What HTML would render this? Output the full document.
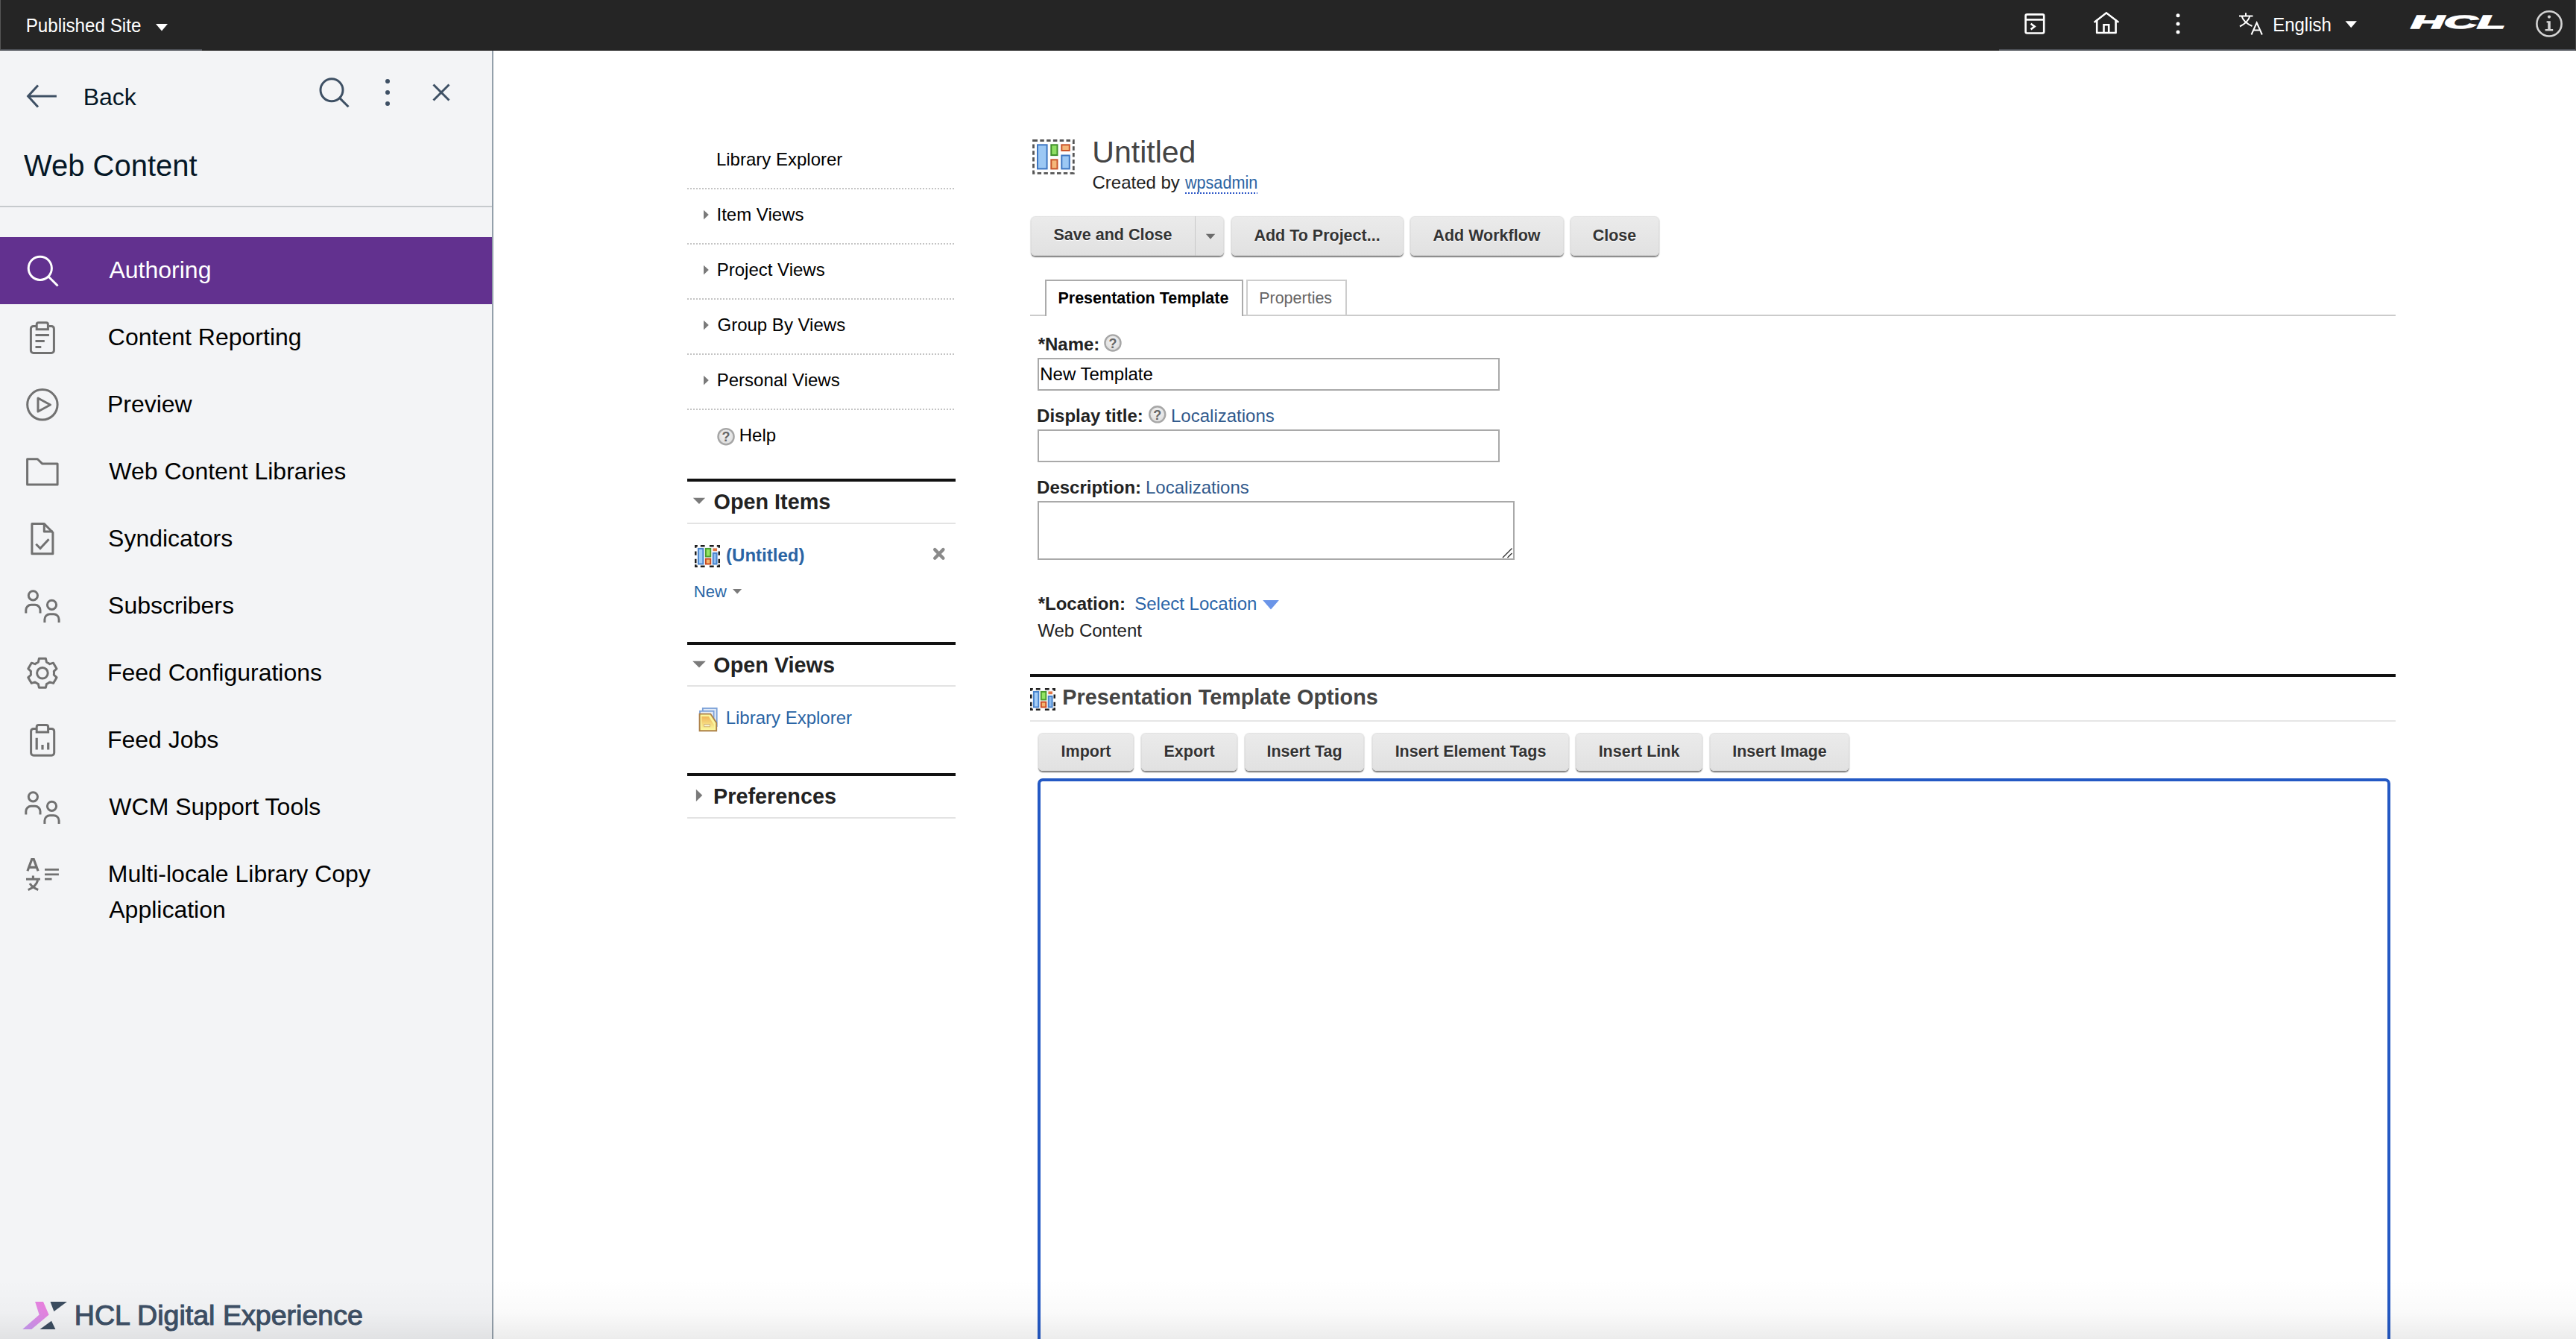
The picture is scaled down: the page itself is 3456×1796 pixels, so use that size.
<!DOCTYPE html><html><head><meta charset="utf-8"><title>Web Content</title><style>
html,body{margin:0;padding:0;width:3456px;height:1796px;overflow:hidden;background:#fff;}
body{position:relative;font-family:"Liberation Sans",sans-serif;}
.a{position:absolute;display:block;}
.t{position:absolute;white-space:nowrap;line-height:normal;}
.btn{position:absolute;border-radius:6px;background:linear-gradient(#ebebeb,#e1e1e1);box-shadow:0 1.5px 1.5px rgba(0,0,0,0.5), inset 0 0 0 1px rgba(0,0,0,0.03);}
.bt{text-shadow:0 1px 1px #fff;}
</style></head><body>
<div class="a" style="left:0px;top:0px;width:3456px;height:68px;background:#252525;"></div>
<div class="a" style="left:0px;top:66px;width:271px;height:2px;background:#50535a;"></div>
<div class="a" style="left:2682px;top:66px;width:774px;height:2px;background:#50535a;"></div>
<div class="a" style="left:0px;top:0px;width:1px;height:68px;background:#555;"></div>
<div class="a" style="left:3455px;top:0px;width:1px;height:68px;background:#444;"></div>
<div class="t " style="left:34.72px;top:21.30px;font-size:24.2px;color:#fff;transform:scaleY(1.07);transform-origin:0 85%;">Published Site</div>
<svg class="a" style="left:205px;top:28px;" width="25" height="18" viewBox="205 28 25 18"><path d="M209 32 L225 32 L217 41.5 Z" fill="#fff"/></svg>
<svg class="a" style="left:2710px;top:12px;" width="40" height="40" viewBox="2710 12 40 40"><rect x="2717.6" y="19.4" width="24.6" height="25.1" rx="2" fill="none" stroke="#fff" stroke-width="2.6"/><line x1="2717.6" y1="26.4" x2="2742.2" y2="26.4" stroke="#fff" stroke-width="2.6"/><path d="M2724.6 31.8 L2729.6 35.6 L2724.6 39.4" fill="none" stroke="#fff" stroke-width="2.6"/></svg>
<svg class="a" style="left:2800px;top:10px;" width="52" height="42" viewBox="2800 10 52 42"><path d="M2809.6 30 L2825.9 17.3 L2842.4 30" fill="none" stroke="#fff" stroke-width="2.6"/><path d="M2813.2 26.5 V44 H2838.6 V26.5" fill="none" stroke="#fff" stroke-width="2.6" stroke-linejoin="round"/><path d="M2822.5 44.5 V33.3 H2829.2 V44.5" fill="none" stroke="#fff" stroke-width="2.6"/></svg>
<svg class="a" style="left:2912px;top:14px;" width="20" height="36" viewBox="2912 14 20 36"><circle cx="2922" cy="20.7" r="2.5" fill="#fff"/><circle cx="2922" cy="32" r="2.5" fill="#fff"/><circle cx="2922" cy="43" r="2.5" fill="#fff"/></svg>
<svg class="a" style="left:2998px;top:12px;" width="42" height="38" viewBox="2998 12 42 38"><path d="M3004 21.5 H3022.5 M3013 17.3 V21.5 M3007.5 21.5 Q3010 30 3021.5 35 M3018.5 21.5 Q3016 30 3005 35.5" fill="none" stroke="#fff" stroke-width="2"/><path d="M3020.5 46.5 L3027.7 30.5 L3034.9 46.5 M3023.2 40.5 H3032.2" fill="none" stroke="#fff" stroke-width="2"/></svg>
<div class="t " style="left:3049.13px;top:20.10px;font-size:24.0px;color:#fff;transform:scaleY(1.07);transform-origin:0 85%;">English</div>
<svg class="a" style="left:3142px;top:24px;" width="24" height="18" viewBox="3142 24 24 18"><path d="M3146.5 28.2 L3162 28.2 L3154.25 37.3 Z" fill="#fff"/></svg>
<svg class="a" style="left:3230px;top:16px;" width="134" height="28" viewBox="3230 16 134 28"><text x="0" y="0" transform="translate(3234.5 38.3) scale(2.25 0.88)" font-family="Liberation Sans" font-weight="bold" font-style="italic" font-size="27.4" fill="#fff" stroke="#fff" stroke-width="1.7">HCL</text></svg>
<svg class="a" style="left:3398px;top:10px;" width="44" height="44" viewBox="3398 10 44 44"><circle cx="3420" cy="31.9" r="16.6" fill="none" stroke="#d4d4d4" stroke-width="2.6"/><circle cx="3420" cy="22.6" r="2.1" fill="#d4d4d4"/><path d="M3416.6 28.2 H3421.8 V38.9 H3425.2 V41.6 H3414.6 V38.9 H3418.2 V30.6 H3416.6 Z" fill="#d4d4d4"/></svg>
<div class="a" style="left:0px;top:68px;width:660px;height:1728px;background:#f3f4f6;"></div>
<div class="a" style="left:660px;top:68px;width:2px;height:1728px;background:#94a0ab;"></div>
<svg class="a" style="left:30px;top:108px;" width="52" height="42" viewBox="30 108 52 42"><path d="M75.9 129 H39 M51 114.5 L37.6 129 L51 143.5" fill="none" stroke="#3e5064" stroke-width="3"/></svg>
<div class="t " style="left:111.68px;top:111.50px;font-size:32px;color:#051726;">Back</div>
<svg class="a" style="left:420px;top:95px;" width="55" height="55" viewBox="420 95 55 55"><circle cx="445" cy="120.8" r="15" fill="none" stroke="#3e5064" stroke-width="3"/><path d="M455.8 131.6 L467.5 143.3" stroke="#3e5064" stroke-width="3"/></svg>
<svg class="a" style="left:510px;top:100px;" width="20" height="48" viewBox="510 100 20 48"><circle cx="520" cy="109" r="3" fill="#3e5064"/><circle cx="520" cy="124" r="3" fill="#3e5064"/><circle cx="520" cy="139" r="3" fill="#3e5064"/></svg>
<svg class="a" style="left:575px;top:107px;" width="35" height="34" viewBox="575 107 35 34"><path d="M581.5 113.5 L602.5 134.5 M602.5 113.5 L581.5 134.5" stroke="#3e5064" stroke-width="3"/></svg>
<div class="t " style="left:31.94px;top:200.10px;font-size:40px;color:#051726;">Web Content</div>
<div class="a" style="left:0px;top:276px;width:660px;height:2px;background:#c6cacd;"></div>
<div class="a" style="left:0px;top:318px;width:660px;height:90px;background:#62318f;"></div>
<div class="t " style="left:146.44px;top:344.30px;font-size:32px;color:#fff;">Authoring</div>
<div class="t " style="left:144.87px;top:434.30px;font-size:32px;color:#000;">Content Reporting</div>
<div class="t " style="left:143.88px;top:524.30px;font-size:32px;color:#000;">Preview</div>
<div class="t " style="left:146.37px;top:614.30px;font-size:32px;color:#000;">Web Content Libraries</div>
<div class="t " style="left:145.06px;top:704.30px;font-size:32px;color:#000;">Syndicators</div>
<div class="t " style="left:145.06px;top:794.30px;font-size:32px;color:#000;">Subscribers</div>
<div class="t " style="left:143.88px;top:884.30px;font-size:32px;color:#000;">Feed Configurations</div>
<div class="t " style="left:143.88px;top:974.30px;font-size:32px;color:#000;">Feed Jobs</div>
<div class="t " style="left:146.37px;top:1064.30px;font-size:32px;color:#000;">WCM Support Tools</div>
<div class="t " style="left:144.78px;top:1154.40px;font-size:32px;color:#000;">Multi-locale Library Copy</div>
<div class="t " style="left:146.24px;top:1202.00px;font-size:32px;color:#000;">Application</div>
<svg class="a" style="left:30px;top:335px;" width="55" height="57" viewBox="30 335 55 57"><circle cx="53.8" cy="359.8" r="15.6" fill="none" stroke="#fff" stroke-width="3"/><path d="M65 371 L77.6 383.5" stroke="#fff" stroke-width="3"/></svg>
<svg class="a" style="left:34px;top:425px;" width="46" height="55" viewBox="34 425 46 55"><path d="M48.4 437.4 H44.9 A3.5 3.5 0 0 0 41.4 440.9 V469.9 A3.5 3.5 0 0 0 44.9 473.4 H68.9 A3.5 3.5 0 0 0 72.4 469.9 V440.9 A3.5 3.5 0 0 0 68.9 437.4 H65.9" fill="none" stroke="#717171" stroke-width="3"/><path d="M49.2 441.8 V435.2 A2.5 2.5 0 0 1 51.7 432.7 H61.9 A2.5 2.5 0 0 1 64.4 435.2 V441.8 Z" fill="none" stroke="#717171" stroke-width="3"/><path d="M47.5 449.6 H65.9 M47.5 457.4 H59.8 M47.5 465.5 H55.3" stroke="#717171" stroke-width="3"/></svg>
<svg class="a" style="left:30px;top:515px;" width="55" height="57" viewBox="30 515 55 57"><circle cx="56.9" cy="542.8" r="20.2" fill="none" stroke="#717171" stroke-width="3"/><path d="M51 534 L67.5 543 L51 552 Z" fill="none" stroke="#717171" stroke-width="3" stroke-linejoin="round"/></svg>
<svg class="a" style="left:30px;top:608px;" width="55" height="50" viewBox="30 608 55 50"><path d="M36.6 615.7 H50.3 L56.6 621.9 H77.1 V650 H36.6 Z" fill="none" stroke="#717171" stroke-width="3" stroke-linejoin="round"/></svg>
<svg class="a" style="left:36px;top:695px;" width="42" height="55" viewBox="36 695 42 55"><path d="M42.9 702.5 H59.3 L70.9 714.3 V742.8 H42.9 Z" fill="none" stroke="#717171" stroke-width="3" stroke-linejoin="round"/><path d="M59.3 702.5 V713 H70.9" fill="none" stroke="#717171" stroke-width="3" stroke-linejoin="round"/><path d="M48.3 729.8 L54 735.5 L65.5 723.3" fill="none" stroke="#717171" stroke-width="3"/></svg>
<svg class="a" style="left:28px;top:785px;" width="58" height="55" viewBox="28 785 58 55"><circle cx="44.4" cy="798.8" r="6.1" fill="none" stroke="#717171" stroke-width="3"/><path d="M34.8 822.4 V818.3 A7 7 0 0 1 41.8 811.3 H47 A7 7 0 0 1 54 818.3 V822.4" fill="none" stroke="#717171" stroke-width="3"/><circle cx="69.5" cy="811.3" r="6.1" fill="none" stroke="#717171" stroke-width="3"/><path d="M59.9 835 V830.7 A7 7 0 0 1 66.9 823.7 H72.1 A7 7 0 0 1 79.1 830.7 V835" fill="none" stroke="#717171" stroke-width="3"/></svg>
<svg class="a" style="left:28px;top:1055px;" width="58" height="55" viewBox="28 1055 58 55"><circle cx="44.4" cy="1068.8" r="6.1" fill="none" stroke="#717171" stroke-width="3"/><path d="M34.8 1092.4 V1088.3 A7 7 0 0 1 41.8 1081.3 H47 A7 7 0 0 1 54 1088.3 V1092.4" fill="none" stroke="#717171" stroke-width="3"/><circle cx="69.5" cy="1081.3" r="6.1" fill="none" stroke="#717171" stroke-width="3"/><path d="M59.9 1105 V1100.7 A7 7 0 0 1 66.9 1093.7 H72.1 A7 7 0 0 1 79.1 1100.7 V1105" fill="none" stroke="#717171" stroke-width="3"/></svg>
<svg class="a" style="left:30px;top:876px;" width="54" height="54" viewBox="30 876 54 54"><path d="M49.10 889.29 L51.31 888.24 L52.40 883.31 L61.40 883.31 L62.49 888.24 L64.70 889.29 L66.72 890.68 L71.53 889.16 L76.03 896.95 L72.31 900.36 L72.50 902.80 L72.31 905.24 L76.03 908.65 L71.53 916.44 L66.72 914.92 L64.70 916.31 L62.49 917.36 L61.40 922.29 L52.40 922.29 L51.31 917.36 L49.10 916.31 L47.08 914.92 L42.27 916.44 L37.77 908.65 L41.49 905.24 L41.30 902.80 L41.49 900.36 L37.77 896.95 L42.27 889.16 L47.08 890.68 Z" fill="none" stroke="#717171" stroke-width="3" stroke-linejoin="round"/><circle cx="56.9" cy="902.8" r="7.3" fill="none" stroke="#717171" stroke-width="3"/></svg>
<svg class="a" style="left:34px;top:965px;" width="46" height="55" viewBox="34 965 46 55"><path d="M48.4 977.4 H45.1 A3.5 3.5 0 0 0 41.6 980.9 V1009.7 A3.5 3.5 0 0 0 45.1 1013.2 H69.2 A3.5 3.5 0 0 0 72.7 1009.7 V980.9 A3.5 3.5 0 0 0 69.2 977.4 H65.9" fill="none" stroke="#717171" stroke-width="3"/><path d="M49.2 982 V975 A2.5 2.5 0 0 1 51.7 972.5 H62.1 A2.5 2.5 0 0 1 64.6 975 V982 Z" fill="none" stroke="#717171" stroke-width="3"/><path d="M49.2 989.8 V1005.5 M57 999 V1005.5 M64.7 996.1 V1005.5" stroke="#717171" stroke-width="3.2"/></svg>
<svg class="a" style="left:30px;top:1145px;" width="54" height="55" viewBox="30 1145 54 55"><path d="M36.9 1168.3 L42.7 1152.7 H45.3 L51.1 1168.3 M39.4 1163.3 H48.6" fill="none" stroke="#717171" stroke-width="3.2" stroke-linejoin="miter"/><path d="M35 1179.3 H53.9 M44.4 1174.4 V1179 M50.6 1180.8 Q48.5 1189 37.7 1193.6 M40 1185 Q43.5 1190.5 51.2 1193.5" fill="none" stroke="#717171" stroke-width="3.1"/><path d="M60 1166.3 H78.9 M60 1172.8 H78.9 M60 1179.1 H69.5" stroke="#717171" stroke-width="2.7"/></svg>
<svg class="a" style="left:26px;top:1740px;" width="70" height="50" viewBox="26 1740 70 50"><defs><linearGradient id="pk" x1="0" y1="1" x2="1" y2="0"><stop offset="0" stop-color="#c79bf2"/><stop offset="1" stop-color="#f07ddc"/></linearGradient></defs><path d="M47.1 1746 H58 L65.6 1763.5 L42.3 1783 H30.2 L52.6 1763.5 Z" fill="url(#pk)"/><path d="M67.5 1746 H89.9 L72.4 1759 Z" fill="#3c4d60"/><path d="M53.5 1783 L69 1771.8 L74.4 1783 Z" fill="#3c4d60"/></svg>
<div class="t " style="left:99.82px;top:1742.80px;font-size:37.6px;color:#3e5066;letter-spacing:0px;-webkit-text-stroke:1.1px #3e5066;">HCL Digital Experience</div>
<div class="t " style="left:960.93px;top:199.90px;font-size:24px;color:#000;">Library Explorer</div>
<div class="a" style="left:922px;top:252px;width:360px;height:2px;background:repeating-linear-gradient(90deg,#c4c4c4 0 2px,transparent 2px 4px);"></div>
<div class="a" style="left:922px;top:326px;width:360px;height:2px;background:repeating-linear-gradient(90deg,#c4c4c4 0 2px,transparent 2px 4px);"></div>
<div class="a" style="left:922px;top:400px;width:360px;height:2px;background:repeating-linear-gradient(90deg,#c4c4c4 0 2px,transparent 2px 4px);"></div>
<div class="a" style="left:922px;top:474px;width:360px;height:2px;background:repeating-linear-gradient(90deg,#c4c4c4 0 2px,transparent 2px 4px);"></div>
<div class="a" style="left:922px;top:548px;width:360px;height:2px;background:repeating-linear-gradient(90deg,#c4c4c4 0 2px,transparent 2px 4px);"></div>
<svg class="a" style="left:943px;top:280px;" width="9" height="16" viewBox="943 280 9 16"><path d="M944 281.7 L950.8 288.1 L944 294.5 Z" fill="#7a7a7a"/></svg>
<div class="t " style="left:961.49px;top:273.70px;font-size:24px;color:#000;">Item Views</div>
<svg class="a" style="left:943px;top:354px;" width="9" height="16" viewBox="943 354 9 16"><path d="M944 355.7 L950.8 362.1 L944 368.5 Z" fill="#7a7a7a"/></svg>
<div class="t " style="left:961.73px;top:347.70px;font-size:24px;color:#000;">Project Views</div>
<svg class="a" style="left:943px;top:428px;" width="9" height="16" viewBox="943 428 9 16"><path d="M944 429.7 L950.8 436.1 L944 442.5 Z" fill="#7a7a7a"/></svg>
<div class="t " style="left:962.50px;top:421.70px;font-size:24px;color:#000;">Group By Views</div>
<svg class="a" style="left:943px;top:502px;" width="9" height="16" viewBox="943 502 9 16"><path d="M944 503.70000000000005 L950.8 510.1 L944 516.5 Z" fill="#7a7a7a"/></svg>
<div class="t " style="left:961.73px;top:495.70px;font-size:24px;color:#000;">Personal Views</div>
<svg class="a" style="left:961px;top:572px;" width="26" height="27" viewBox="961 572 26 27"><defs><radialGradient id="hg962573" cx="0.5" cy="0.4" r="0.6"><stop offset="0" stop-color="#f4f4f4"/><stop offset="1" stop-color="#dcdcdc"/></radialGradient></defs><circle cx="974.05" cy="585.65" r="10.55" fill="url(#hg962573)" stroke="#a6a6a6" stroke-width="2.4"/><text x="974.05" y="592.4499999999999" text-anchor="middle" font-family="Liberation Sans" font-weight="bold" font-size="18" fill="#666">?</text></svg>
<div class="t " style="left:991.73px;top:569.80px;font-size:24px;color:#000;">Help</div>
<div class="a" style="left:922px;top:642px;width:360px;height:4px;background:#111;"></div>
<svg class="a" style="left:928px;top:666px;" width="20" height="11" viewBox="928 666 20 11"><path d="M929.8 667.8 L946.1 667.8 L937.95 675.9 Z" fill="#7a7a7a"/></svg>
<div class="t " style="left:957.52px;top:657.40px;font-size:28.8px;color:#222;font-weight:bold;">Open Items</div>
<div class="a" style="left:922px;top:701px;width:360px;height:2px;background:#e3e3e3;"></div>
<svg class="a" style="left:932px;top:731px;" width="34" height="30" viewBox="0 0 34 30"><rect x="2.5" y="2.5" width="29" height="25" fill="#f7fafd"/><path d="M0 1.25 H3.8 M0 28.75 H3.8 M7.8 1.25 H13.6 M7.8 28.75 H13.6 M19.9 1.25 H25.7 M19.9 28.75 H25.7 M29.8 1.25 H34 M29.8 28.75 H34 M1.25 0 V3.8 M32.75 0 V3.8 M1.25 8.4 V13.8 M32.75 8.4 V13.8 M1.25 18.8 V24.2 M32.75 18.8 V24.2 M1.25 26.2 V30 M32.75 26.2 V30" stroke="#1e1e1e" stroke-width="2.5" fill="none"/><rect x="4.9" y="4.9" width="6.4" height="20.6" fill="#a3cdf8" stroke="#4682cc" stroke-width="1.9"/><rect x="14.8" y="4.9" width="6.5" height="10.6" fill="#93e462" stroke="#4a9c2e" stroke-width="1.9"/><rect x="24.4" y="4.4" width="5.6" height="3.8" fill="#e27444"/><rect x="14.8" y="18.6" width="6.5" height="6.9" fill="#f3b46f" stroke="#c94820" stroke-width="1.9"/><rect x="24.7" y="10.9" width="4.9" height="14.6" fill="#8fbdef" stroke="#4682cc" stroke-width="1.9"/></svg>
<div class="t " style="left:974.10px;top:731.20px;font-size:24px;color:#2a64a4;font-weight:bold;">(Untitled)</div>
<svg class="a" style="left:1249px;top:732px;" width="22" height="22" viewBox="1249 732 22 22"><path d="M1254.2 737.1 L1265.4 748.7 M1265.4 737.1 L1254.2 748.7" stroke="#8a8a8a" stroke-width="4.4" stroke-linecap="round"/></svg>
<div class="t " style="left:930.80px;top:780.90px;font-size:22px;color:#2a64a4;">New</div>
<svg class="a" style="left:982px;top:789px;" width="15" height="9" viewBox="982 789 15 9"><path d="M983 790 L995.2 790 L989.1 796.4 Z" fill="#7a7a7a"/></svg>
<div class="a" style="left:922px;top:861px;width:360px;height:4px;background:#111;"></div>
<svg class="a" style="left:928px;top:885px;" width="20" height="12" viewBox="928 885 20 12"><path d="M929.2 886.8 L946.8 886.8 L938.0 895.4 Z" fill="#7a7a7a"/></svg>
<div class="t " style="left:957.32px;top:876.10px;font-size:28.8px;color:#222;font-weight:bold;">Open Views</div>
<div class="a" style="left:922px;top:919px;width:360px;height:2px;background:#e3e3e3;"></div>
<svg class="a" style="left:936px;top:947px;" width="29" height="36" viewBox="936 947 29 36"><defs><linearGradient id="fy" x1="0" y1="0" x2="0" y2="1"><stop offset="0" stop-color="#efb55a"/><stop offset="1" stop-color="#faf59a"/></linearGradient></defs><rect x="942.8" y="950" width="18.9" height="24" fill="#e3ebf6" stroke="#7aa0d8" stroke-width="1.8"/><rect x="939" y="953.8" width="18.6" height="24" fill="#e8eef7" stroke="#7aa0d8" stroke-width="1.8"/><path d="M938.6 957.6 H953.3 L961.2 969.6 V980.3 H938.6 Z" fill="#fbf59c" stroke="#ad8148" stroke-width="1.9"/><path d="M941.3 961 H950.8 L958 972 V978 H941.3 Z" fill="url(#fy)"/><rect x="944.5" y="971.5" width="8" height="3.2" fill="#f6efcf" stroke="#d4b774" stroke-width="1"/></svg>
<div class="t " style="left:973.63px;top:949.00px;font-size:24px;color:#2a64a4;">Library Explorer</div>
<div class="a" style="left:922px;top:1037px;width:360px;height:4px;background:#111;"></div>
<svg class="a" style="left:932px;top:1057px;" width="12" height="19" viewBox="932 1057 12 19"><path d="M933.9 1058.8 L942.3 1066.85 L933.9 1074.9 Z" fill="#7a7a7a"/></svg>
<div class="t " style="left:957.07px;top:1051.90px;font-size:28.8px;color:#222;font-weight:bold;">Preferences</div>
<div class="a" style="left:922px;top:1096px;width:360px;height:2px;background:#e3e3e3;"></div>
<svg class="a" style="left:1385px;top:187px;" width="58" height="48" viewBox="0 0 58 48"><rect x="1.5" y="1.5" width="53.8" height="43.8" fill="#fdfdfd" stroke="#555" stroke-width="2.8" stroke-dasharray="5.5 3.3"/><rect x="7" y="7.3" width="12.6" height="32.1" fill="#9cc8f4" stroke="#3d76c2" stroke-width="2"/><rect x="25.3" y="7.3" width="8.2" height="13.8" fill="#8fdf63" stroke="#41902b" stroke-width="2"/><rect x="39.3" y="7.3" width="10.5" height="7.7" fill="#f5b77a" stroke="#c9552b" stroke-width="2"/><rect x="25.3" y="27.3" width="8.2" height="12.1" fill="#f5b77a" stroke="#c9552b" stroke-width="2"/><rect x="39.3" y="21.5" width="10.5" height="17.9" fill="#9cc8f4" stroke="#3d76c2" stroke-width="2"/></svg>
<div class="t " style="left:1465.34px;top:181.20px;font-size:41px;color:#444;">Untitled</div>
<div class="t " style="left:1465.48px;top:230.60px;font-size:24px;color:#222;">Created by</div>
<div class="t " style="left:1589.97px;top:232.60px;font-size:21.6px;color:#2a64a4;transform:scaleY(1.08);transform-origin:0 85%;">wpsadmin</div>
<div class="a" style="left:1590px;top:258px;width:97px;height:2px;background:repeating-linear-gradient(90deg,#2a55c8 0 2px,transparent 2px 4px);"></div>
<div class="btn" style="left:1383px;top:290px;width:259px;height:53px;"></div>
<div class="a" style="left:1603px;top:290px;width:1px;height:53px;background:#c9c9c9;"></div>
<div class="t bt" style="left:1383px;width:220px;text-align:center;top:303.1px;font-size:21.5px;font-weight:bold;color:#333;">Save and Close</div>
<svg class="a" style="left:1614px;top:310px;" width="20" height="14" viewBox="1614 310 20 14"><path d="M1617.8 313.8 L1630.3 313.8 L1624 320.8 Z" fill="#6b6b6b"/></svg>
<div class="btn" style="left:1651.5px;top:290px;width:231.0px;height:53px;"></div>
<div class="t bt" style="left:1651.5px;width:231.0px;text-align:center;top:304.1px;font-size:21.5px;font-weight:bold;color:#333;">Add To Project...</div>
<div class="btn" style="left:1891.5px;top:290px;width:206.0px;height:53px;"></div>
<div class="t bt" style="left:1891.5px;width:206.0px;text-align:center;top:304.1px;font-size:21.5px;font-weight:bold;color:#333;">Add Workflow</div>
<div class="btn" style="left:2106.5px;top:290px;width:119.0px;height:53px;"></div>
<div class="t bt" style="left:2106.5px;width:119.0px;text-align:center;top:304.1px;font-size:21.5px;font-weight:bold;color:#333;">Close</div>
<div class="a" style="left:1382px;top:422px;width:1832px;height:2px;background:#cbcbcb;"></div>
<div class="a" style="left:1402px;top:375px;width:262px;height:47px;border:2px solid #ababab;border-bottom:none;background:#fff;"></div>
<div class="t " style="left:1419.46px;top:388.30px;font-size:21.5px;color:#000;font-weight:bold;">Presentation Template</div>
<div class="a" style="left:1672px;top:375px;width:131px;height:45px;border:2px solid #cdcdcd;background:#fff;"></div>
<div class="t " style="left:1689.14px;top:388.30px;font-size:21.5px;color:#666;">Properties</div>
<div class="t " style="left:1392.63px;top:448.20px;font-size:24px;color:#222;font-weight:bold;">*Name:</div>
<svg class="a" style="left:1480px;top:447px;" width="26" height="26" viewBox="1480 447 26 26"><defs><radialGradient id="hg1481448" cx="0.5" cy="0.4" r="0.6"><stop offset="0" stop-color="#f4f4f4"/><stop offset="1" stop-color="#dcdcdc"/></radialGradient></defs><circle cx="1492.95" cy="459.95" r="10.55" fill="url(#hg1481448)" stroke="#a6a6a6" stroke-width="2.4"/><text x="1492.95" y="466.75" text-anchor="middle" font-family="Liberation Sans" font-weight="bold" font-size="18" fill="#666">?</text></svg>
<div class="a" style="left:1392px;top:480px;width:616px;height:40px;border:2px solid #a9a9a9;background:#fff;"></div>
<div class="t " style="left:1395.23px;top:487.90px;font-size:24px;color:#000;">New Template</div>
<div class="t " style="left:1391.09px;top:544.00px;font-size:24px;color:#222;font-weight:bold;">Display title:</div>
<svg class="a" style="left:1540px;top:543px;" width="26" height="26" viewBox="1540 543 26 26"><defs><radialGradient id="hg1541544" cx="0.5" cy="0.4" r="0.6"><stop offset="0" stop-color="#f4f4f4"/><stop offset="1" stop-color="#dcdcdc"/></radialGradient></defs><circle cx="1552.75" cy="555.85" r="10.55" fill="url(#hg1541544)" stroke="#a6a6a6" stroke-width="2.4"/><text x="1552.75" y="562.65" text-anchor="middle" font-family="Liberation Sans" font-weight="bold" font-size="18" fill="#666">?</text></svg>
<div class="t " style="left:1571.03px;top:544.00px;font-size:24px;color:#30598c;">Localizations</div>
<div class="a" style="left:1392px;top:576px;width:616px;height:40px;border:2px solid #a9a9a9;background:#fff;"></div>
<div class="t " style="left:1391.09px;top:639.70px;font-size:24px;color:#222;font-weight:bold;">Description:</div>
<div class="t " style="left:1537.03px;top:639.70px;font-size:24px;color:#30598c;">Localizations</div>
<div class="a" style="left:1392px;top:672px;width:636px;height:75px;border:2px solid #a9a9a9;background:#fff;"></div>
<svg class="a" style="left:2010px;top:730px;" width="20" height="20" viewBox="2010 730 20 20"><path d="M2016 748 L2028.5 735.5 M2022.5 748 L2028.5 742" stroke="#333" stroke-width="1.4"/></svg>
<div class="t " style="left:1392.63px;top:796.40px;font-size:24px;color:#222;font-weight:bold;">*Location:</div>
<div class="t " style="left:1522.22px;top:796.40px;font-size:24px;color:#2a64a8;">Select Location</div>
<svg class="a" style="left:1692px;top:802px;" width="26" height="18" viewBox="1692 802 26 18"><path d="M1694.2 805 L1715.9 805 L1705 817.5 Z" fill="#6b95e8"/></svg>
<div class="t " style="left:1392.30px;top:831.90px;font-size:24px;color:#222;">Web Content</div>
<div class="a" style="left:1382px;top:904px;width:1832px;height:4px;background:#111;"></div>
<svg class="a" style="left:1382px;top:923px;" width="34" height="30" viewBox="0 0 34 30"><rect x="2.5" y="2.5" width="29" height="25" fill="#f7fafd"/><path d="M0 1.25 H3.8 M0 28.75 H3.8 M7.8 1.25 H13.6 M7.8 28.75 H13.6 M19.9 1.25 H25.7 M19.9 28.75 H25.7 M29.8 1.25 H34 M29.8 28.75 H34 M1.25 0 V3.8 M32.75 0 V3.8 M1.25 8.4 V13.8 M32.75 8.4 V13.8 M1.25 18.8 V24.2 M32.75 18.8 V24.2 M1.25 26.2 V30 M32.75 26.2 V30" stroke="#1e1e1e" stroke-width="2.5" fill="none"/><rect x="4.9" y="4.9" width="6.4" height="20.6" fill="#a3cdf8" stroke="#4682cc" stroke-width="1.9"/><rect x="14.8" y="4.9" width="6.5" height="10.6" fill="#93e462" stroke="#4a9c2e" stroke-width="1.9"/><rect x="24.4" y="4.4" width="5.6" height="3.8" fill="#e27444"/><rect x="14.8" y="18.6" width="6.5" height="6.9" fill="#f3b46f" stroke="#c94820" stroke-width="1.9"/><rect x="24.7" y="10.9" width="4.9" height="14.6" fill="#8fbdef" stroke="#4682cc" stroke-width="1.9"/></svg>
<div class="t " style="left:1425.27px;top:919.40px;font-size:28.8px;color:#444;font-weight:bold;">Presentation Template Options</div>
<div class="a" style="left:1382px;top:966px;width:1832px;height:2px;background:#e6e6e6;"></div>
<div class="btn" style="left:1393px;top:982.5px;width:128px;height:51.0px;"></div>
<div class="t bt" style="left:1393px;width:128px;text-align:center;top:995.8px;font-size:21.5px;font-weight:bold;color:#333;">Import</div>
<div class="btn" style="left:1531px;top:982.5px;width:129px;height:51.0px;"></div>
<div class="t bt" style="left:1531px;width:129px;text-align:center;top:995.8px;font-size:21.5px;font-weight:bold;color:#333;">Export</div>
<div class="btn" style="left:1670px;top:982.5px;width:160px;height:51.0px;"></div>
<div class="t bt" style="left:1670px;width:160px;text-align:center;top:995.8px;font-size:21.5px;font-weight:bold;color:#333;">Insert Tag</div>
<div class="btn" style="left:1841px;top:982.5px;width:264px;height:51.0px;"></div>
<div class="t bt" style="left:1841px;width:264px;text-align:center;top:995.8px;font-size:21.5px;font-weight:bold;color:#333;">Insert Element Tags</div>
<div class="btn" style="left:2114px;top:982.5px;width:170px;height:51.0px;"></div>
<div class="t bt" style="left:2114px;width:170px;text-align:center;top:995.8px;font-size:21.5px;font-weight:bold;color:#333;">Insert Link</div>
<div class="btn" style="left:2294px;top:982.5px;width:187px;height:51.0px;"></div>
<div class="t bt" style="left:2294px;width:187px;text-align:center;top:995.8px;font-size:21.5px;font-weight:bold;color:#333;">Insert Image</div>
<div class="a" style="left:1392px;top:1044px;width:1807px;height:800px;border:4px solid #2459c4;border-radius:7px;background:#fff;"></div>
<div class="a" style="left:0px;top:1716px;width:3456px;height:80px;background:linear-gradient(rgba(0,0,0,0),rgba(0,0,0,0.018) 55%,rgba(0,0,0,0.075));pointer-events:none;"></div>
<script>(function(){var w=window.innerWidth;if(w&&Math.abs(w-3456)>2){document.documentElement.style.zoom=(w/3456);}})();</script>
</body></html>
